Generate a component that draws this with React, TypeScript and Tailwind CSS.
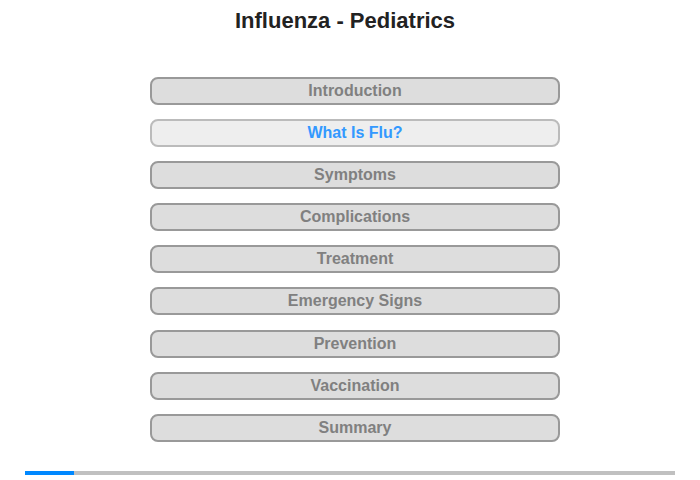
import React from 'react';

const topics = [
  'Introduction',
  'What Is Flu?',
  'Symptoms',
  'Complications',
  'Treatment',
  'Emergency Signs',
  'Prevention',
  'Vaccination',
  'Summary',
];

const active = 1;

export default function App() {
  return (
    <div className="w-[700px] h-[480px] bg-white font-['Liberation_Sans',Arial,sans-serif] flex flex-col">
      {/* Title */}
      <h1 className="pt-[8px] pr-[10px] text-center text-[22px] leading-[25px] font-bold text-[#222]">
        Influenza - Pediatrics
      </h1>

      {/* Topic menu */}
      <div className="mt-[44px] ml-[150px] w-[410px] flex flex-col gap-[14.1px]">
        {topics.map((t, i) => (
          <button
            key={t}
            className={
              i === active
                ? 'h-[28px] rounded-[8px] border-2 border-[#bbbbbb] bg-[#eeeeee] text-[16px] font-bold leading-none text-[#3399ff]'
                : 'h-[28px] rounded-[8px] border-2 border-[#999999] bg-[#dddddd] text-[16px] font-bold leading-none text-[#808080]'
            }
          >
            {t}
          </button>
        ))}
      </div>

      {/* Progress */}
      <div className="mt-[29px] mx-[25px] h-[4px] bg-[#c0c0c0] flex">
        <div className="w-[49px] h-full bg-[#0088ff]" />
      </div>
    </div>
  );
}
